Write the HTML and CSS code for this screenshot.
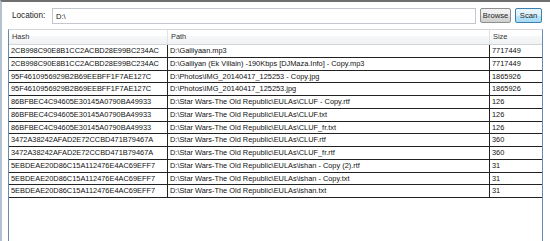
FILE: index.html
```html
<!DOCTYPE html>
<html lang="en">
<head>
    <meta charset="UTF-8">
    <title>Duplicate Finder</title>
    <link rel="stylesheet" href="styles.css">
</head>
<body>
    <div class="window">
        <div class="toolbar">
            <span class="label">Location:</span>
            <div class="location">D:\</div>
            <button class="btn">Browse</button>
            <button class="btn scan">Scan</button>
        </div>

        <div class="grid">
            <div class="row head">
                <div class="cell">Hash</div>
                <div class="cell">Path</div>
                <div class="cell">Size</div>
            </div>
            <div class="row">
                <div class="cell">2CB998C90E8B1CC2ACBD28E99BC234AC</div>
                <div class="cell">D:\Galliyaan.mp3</div>
                <div class="cell">7717449</div>
            </div>
            <div class="row">
                <div class="cell">2CB998C90E8B1CC2ACBD28E99BC234AC</div>
                <div class="cell">D:\Galliyan (Ek Villain) -190Kbps [DJMaza.Info] - Copy.mp3</div>
                <div class="cell">7717449</div>
            </div>
            <div class="row">
                <div class="cell">95F4610956929B2B69EEBFF1F7AE127C</div>
                <div class="cell">D:\Photos\IMG_20140417_125253 - Copy.jpg</div>
                <div class="cell">1865926</div>
            </div>
            <div class="row">
                <div class="cell">95F4610956929B2B69EEBFF1F7AE127C</div>
                <div class="cell">D:\Photos\IMG_20140417_125253.jpg</div>
                <div class="cell">1865926</div>
            </div>
            <div class="row">
                <div class="cell">86BFBEC4C94605E30145A0790BA49933</div>
                <div class="cell">D:\Star Wars-The Old Republic\EULAs\CLUF - Copy.rtf</div>
                <div class="cell">126</div>
            </div>
            <div class="row">
                <div class="cell">86BFBEC4C94605E30145A0790BA49933</div>
                <div class="cell">D:\Star Wars-The Old Republic\EULAs\CLUF.txt</div>
                <div class="cell">126</div>
            </div>
            <div class="row">
                <div class="cell">86BFBEC4C94605E30145A0790BA49933</div>
                <div class="cell">D:\Star Wars-The Old Republic\EULAs\CLUF_fr.txt</div>
                <div class="cell">126</div>
            </div>
            <div class="row">
                <div class="cell">3472A38242AFAD2E72CCBD471B79467A</div>
                <div class="cell">D:\Star Wars-The Old Republic\EULAs\CLUF.rtf</div>
                <div class="cell">360</div>
            </div>
            <div class="row">
                <div class="cell">3472A38242AFAD2E72CCBD471B79467A</div>
                <div class="cell">D:\Star Wars-The Old Republic\EULAs\CLUF_fr.rtf</div>
                <div class="cell">360</div>
            </div>
            <div class="row">
                <div class="cell">5EBDEAE20D86C15A112476E4AC69EFF7</div>
                <div class="cell">D:\Star Wars-The Old Republic\EULAs\ishan - Copy (2).rtf</div>
                <div class="cell">31</div>
            </div>
            <div class="row">
                <div class="cell">5EBDEAE20D86C15A112476E4AC69EFF7</div>
                <div class="cell">D:\Star Wars-The Old Republic\EULAs\ishan - Copy.txt</div>
                <div class="cell">31</div>
            </div>
            <div class="row">
                <div class="cell">5EBDEAE20D86C15A112476E4AC69EFF7</div>
                <div class="cell">D:\Star Wars-The Old Republic\EULAs\ishan.txt</div>
                <div class="cell">31</div>
            </div>
        </div>
    </div>
</body>
</html>
```

FILE: styles.css
```css
html, body {
    margin: 0;
    padding: 0;
    height: 100%;
    background-color: white;
    overflow: hidden;
}
body {
    font-family: "Liberation Sans", Arial, sans-serif;
    font-size: 7.4px;
    color: #111;
}
.window {
    height: 100%;
    box-sizing: border-box;
    border-top: 2px solid #6f6f6f;
    border-left: 2px solid #b4c2d0;
    display: flex;
    flex-direction: column;
}
.toolbar {
    display: flex;
    align-items: center;
    padding: 5px 8px 3px 10px;
    gap: 4px;
    height: 17px;
}
.label {
    width: 36px;
    font-size: 8.2px;
    color: #222;
}
.location {
    flex: 1;
    height: 16px;
    box-sizing: border-box;
    border: 1px solid #c4c8ce;
    padding: 3px 3px;
    font-size: 7.6px;
}
.btn {
    width: 31px;
    height: 15px;
    padding: 0;
    font-family: inherit;
    font-size: 7.6px;
    color: #222;
    border: 1px solid #8e8f8f;
    border-radius: 2px;
    background: linear-gradient(#f2f2f2, #ebebeb 50%, #dddddd 51%, #cfcfcf);
}
.btn.scan {
    width: 27px;
    border-color: #3c7fb1;
    background: linear-gradient(#eaf6fd, #d9f0fc 50%, #bee6fd 51%, #a7d9f5);
}
.grid {
    flex: 1;
    margin: 2px 7px 0 6px;
    border-left: 1px solid #688caf;
    border-right: 1px solid #688caf;
    border-top: 1px solid #d5d5d5;
}
.row {
    display: grid;
    grid-template-columns: 158px 322px 1fr;
    height: 12.75px;
    box-sizing: border-box;
    border-bottom: 1px solid #222;
}
.row .cell {
    padding: 0 2px;
    line-height: 11.75px;
    white-space: nowrap;
    overflow: hidden;
}
.row .cell + .cell {
    border-left: 1px solid #222;
}
.row.head {
    height: 15px;
    border-bottom: 1px solid #d5d5d5;
    background: linear-gradient(#ffffff, #ffffff 40%, #f7f8fa 41%, #f1f2f4);
}
.row.head .cell {
    line-height: 14px;
    padding: 0 3px;
    color: #333;
}
.row.head .cell + .cell {
    border-left: 1px solid #dfe2e6;
}
```
